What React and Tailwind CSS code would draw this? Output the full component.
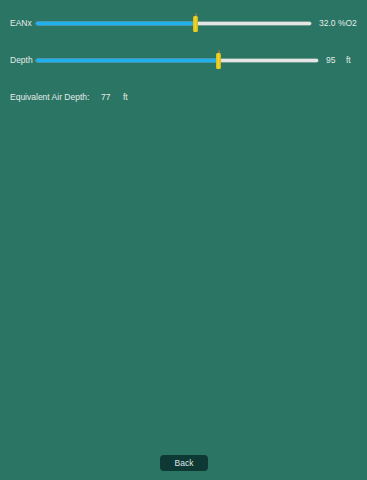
import React from "react";

const Slider = ({ width, thumbX }) => (
  <div className="relative h-[18px]" style={{ width }}>
    {/* track */}
    <div className="absolute left-0 right-0 top-[8px] h-[3px] rounded-full bg-[#e4e6e6] shadow-[0_0_0_0.5px_#b9c4c0]" />
    <div
      className="absolute left-0 top-[8px] h-[3px] rounded-full bg-[#20b0ec] shadow-[0_0_0_0.5px_#1d8fc4]"
      style={{ width: thumbX }}
    />
    {/* thumb */}
    <div className="absolute top-[-1px] flex flex-col items-center" style={{ left: thumbX - 2 }}>
      <div className="w-[2px] h-[3px] rounded-t-sm bg-[#7b7a55]" />
      <div className="w-[5px] h-[16px] rounded-[1.5px] bg-gradient-to-r from-[#d9bd16] via-[#f0d52a] to-[#cfb30f]" />
    </div>
  </div>
);

export default function App() {
  return (
    <div className="w-[367px] h-[480px] bg-[#2b7564] flex flex-col text-[#e4ece9] text-[8.5px] font-['Helvetica_Neue','Liberation_Sans',sans-serif]">
      <div className="flex items-center pl-[10px] mt-[14px] h-[18px]">
        <span className="w-[26px]">EANx</span>
        <Slider width={275} thumbX={159} />
        <span className="ml-[8px]">32.0 %O2</span>
      </div>

      <div className="flex items-center pl-[10px] mt-[19px] h-[18px]">
        <span className="w-[26px]">Depth</span>
        <Slider width={282} thumbX={182} />
        <span className="ml-[8px] w-[20px]">95</span>
        <span>ft</span>
      </div>

      <div className="flex items-center pl-[10px] mt-[22px] h-[12px]">
        <span className="w-[91px]">Equivalent Air Depth:</span>
        <span className="w-[22px]">77</span>
        <span>ft</span>
      </div>

      <div className="mt-auto mb-[9px] flex justify-center">
        <button className="w-[48px] h-[16px] ml-[1px] rounded-[4px] bg-[#0d3833] text-[#dfe6e3] text-[8.5px] leading-none">
          Back
        </button>
      </div>
    </div>
  );
}
